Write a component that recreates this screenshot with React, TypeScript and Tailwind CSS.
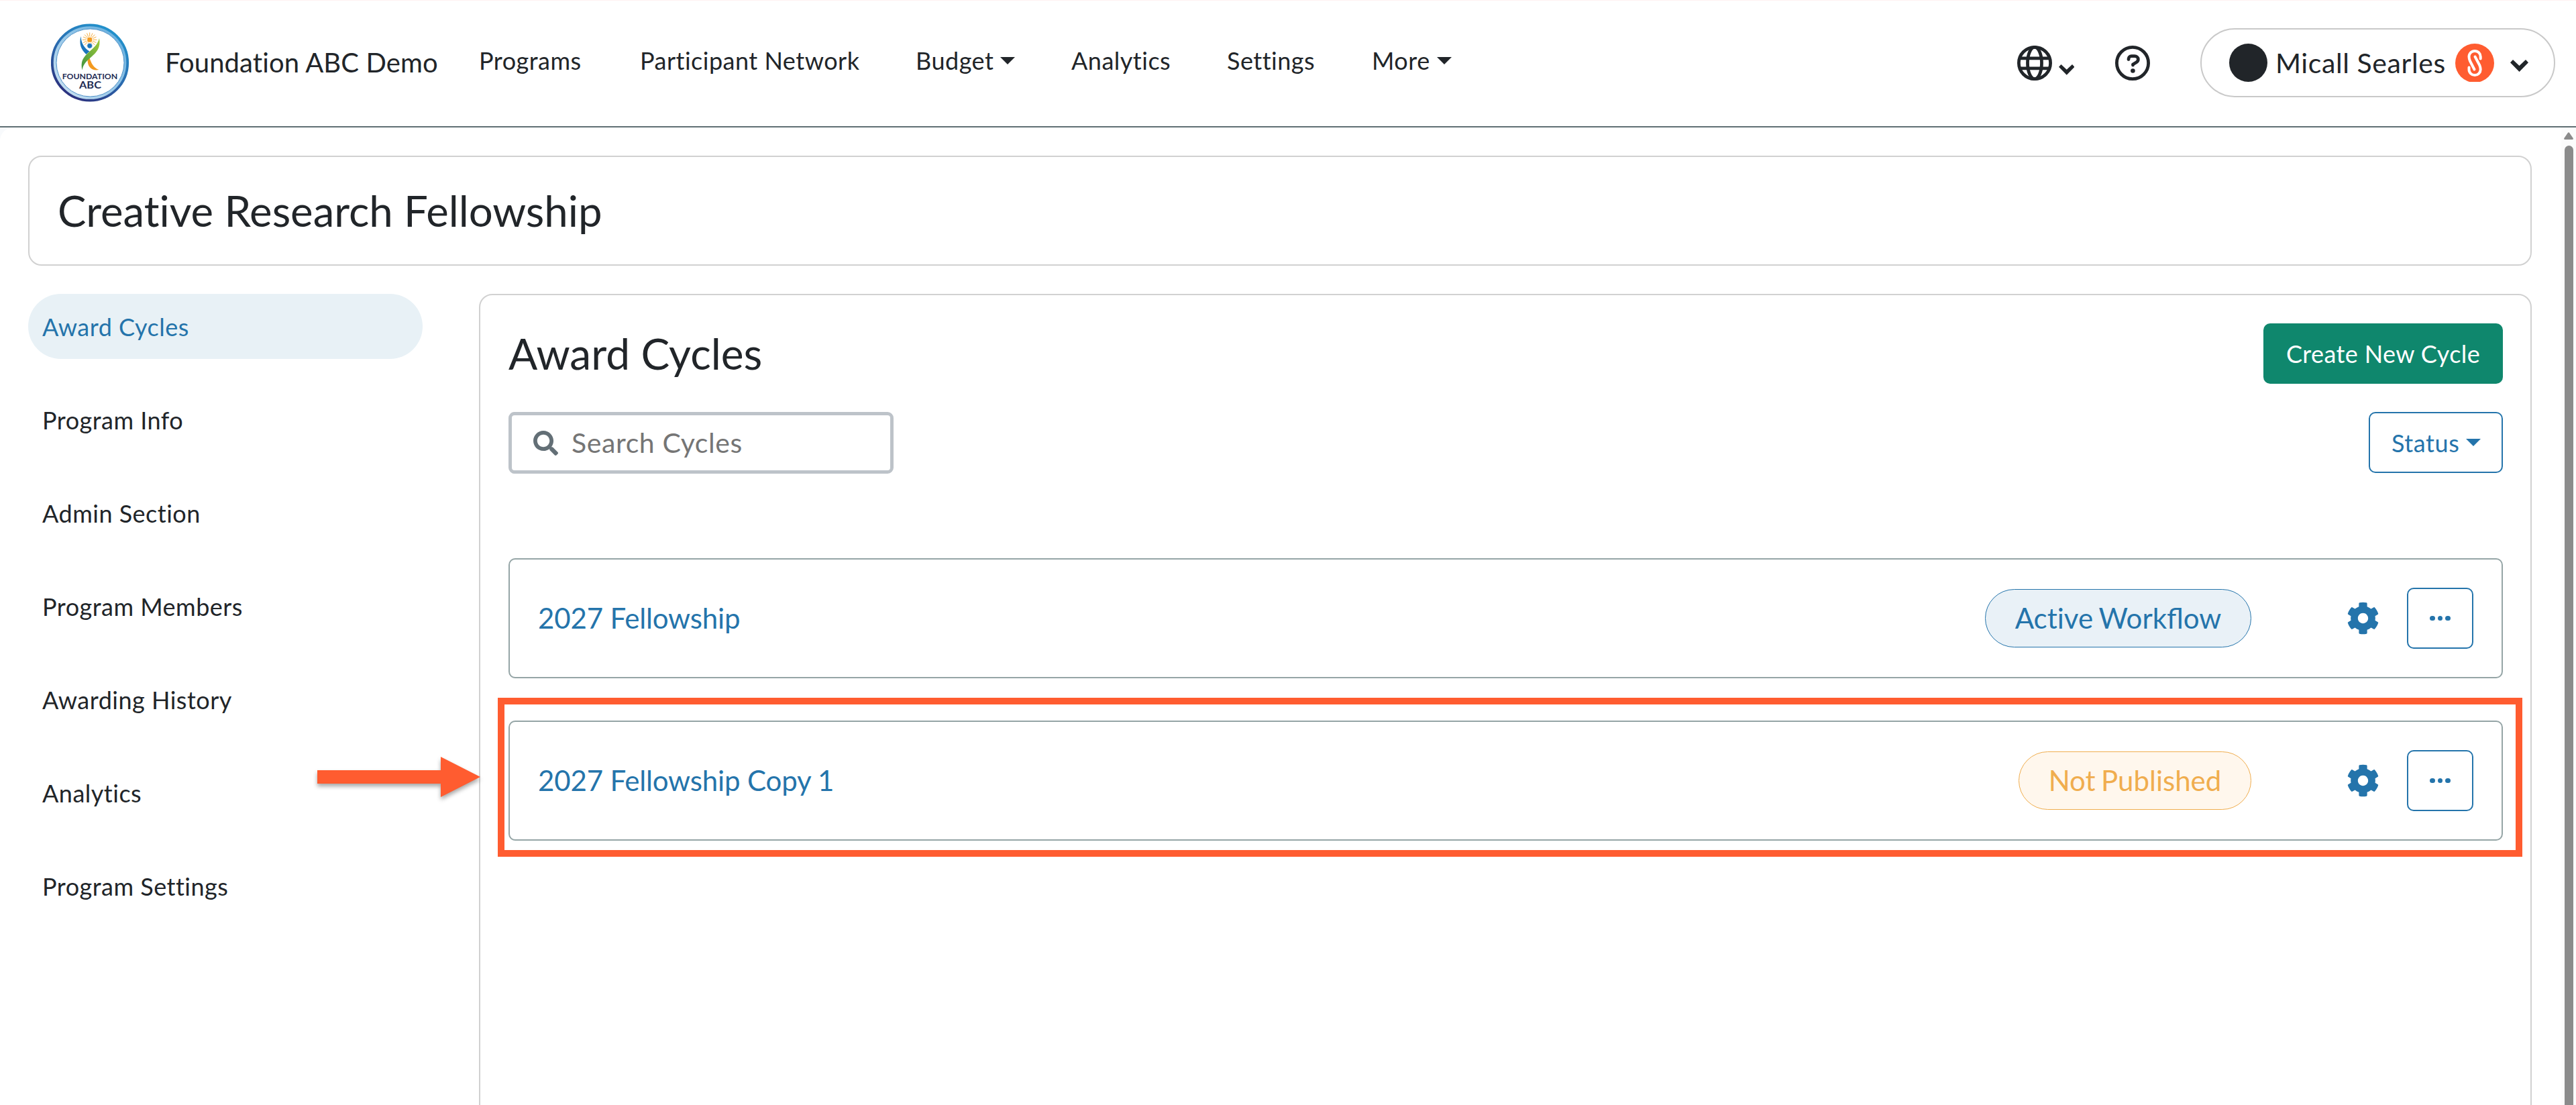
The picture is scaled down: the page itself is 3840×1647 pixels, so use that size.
import { FaCog, FaSearch } from 'react-icons/fa'

const navItems = [
  { label: 'Programs', width: 'w-[240px]' },
  { label: 'Participant Network', width: 'w-[411px]' },
  { label: 'Budget', width: 'w-[232px]', caret: true },
  { label: 'Analytics', width: 'w-[232px]' },
  { label: 'Settings', width: 'w-[216px]' },
  { label: 'More', width: 'w-[140px]', caret: true },
]

const sideItems = [
  'Award Cycles',
  'Program Info',
  'Admin Section',
  'Program Members',
  'Awarding History',
  'Analytics',
  'Program Settings',
]

const cycles = [
  { name: '2027 Fellowship', status: ['Active', 'Workflow'], published: true },
  { name: '2027 Fellowship Copy 1', status: ['Not', 'Published'], published: false },
]

function Caret() {
  return (
    <svg width="22" height="11" viewBox="0 0 22 11" className="ml-2.5 shrink-0" fill="currentColor">
      <path d="M0 0H22L11 11Z" />
    </svg>
  )
}

function Chevron({ className }: { className: string }) {
  return (
    <svg viewBox="0 0 27 18" className={className} fill="currentColor">
      <path d="M4 0L13.500 9L23 0L27 4.200L13.500 18L0 4.200Z" />
    </svg>
  )
}

function FoundationLogo() {
  return (
    <svg width="118" height="118" viewBox="0 0 118 118" className="shrink-0">
      <defs>
        <linearGradient id="ring" x1="0.2" y1="1" x2="0.8" y2="0">
          <stop offset="0" stopColor="#2b2a78" />
          <stop offset="0.5" stopColor="#2a6cb0" />
          <stop offset="1" stopColor="#2196cf" />
        </linearGradient>
        <linearGradient id="band" x1="1" y1="0" x2="0" y2="1">
          <stop offset="0" stopColor="#5aa9dc" />
          <stop offset="1" stopColor="#d4e6f4" />
        </linearGradient>
        <linearGradient id="leaf" x1="0" y1="1" x2="1" y2="0">
          <stop offset="0" stopColor="#3f9440" />
          <stop offset="1" stopColor="#a3cb38" />
        </linearGradient>
      </defs>
      <circle cx="58" cy="58.500" r="56.200" fill="url(#band)" stroke="url(#ring)" strokeWidth="3.800" />
      <circle cx="58.500" cy="58.500" r="50.500" fill="#fff" stroke="#4d90c8" strokeWidth="1" />
      <path
        d="M57.700 13.500V35M47 24.300H68.500M50 16.600L65.400 32M65.400 16.600L50 32M53.500 14.500L62 34M62 14.500L53.500 34M48 20L67.500 28.600M67.500 20L48 28.600"
        stroke="#f3a52c"
        strokeWidth="0.900"
      />
      <circle cx="57.700" cy="24.300" r="4.800" fill="#fff" />
      <rect x="54.200" y="20.800" width="7" height="7" rx="2" fill="#f39a1f" />
      <circle cx="57.700" cy="33.300" r="4" fill="#1b75bb" stroke="#fff" strokeWidth="0.800" />
      <path d="M44.500 19C45.500 30 49 36 57.500 41.500L52.500 46C45 39 41.500 31 44.500 19Z" fill="#1b75bb" />
      <path d="M57 50C60 59 63 66 71.500 69C62 71 54.500 66 54.500 54Z" fill="#f39a1f" />
      <path d="M72 22C74.500 36 68 43 60 50C52 57 48 61 46.500 69.500C44 58 47 52 54 45C62 37.500 69 33 72 22Z" fill="url(#leaf)" />
      <text x="16.700" y="82.700" fontSize="10.500" fontWeight="700" fill="#232c54" textLength="82.500" lengthAdjust="spacingAndGlyphs">
        FOUNDATION
      </text>
      <text x="42" y="97" fontSize="14.400" fontWeight="700" fill="#232c54" textLength="33" lengthAdjust="spacingAndGlyphs">
        ABC
      </text>
    </svg>
  )
}

function GlobeIcon() {
  return (
    <svg width="52" height="52" viewBox="0 0 52 52" fill="none" stroke="currentColor" strokeWidth="4.800" className="shrink-0">
      <circle cx="26" cy="26" r="23.600" />
      <ellipse cx="26" cy="26" rx="10.500" ry="23.600" />
      <path d="M3 18.800H49M3 33.800H49" />
    </svg>
  )
}

function HelpIcon() {
  return (
    <svg width="52" height="52" viewBox="0 0 52 52" fill="none" stroke="currentColor" strokeWidth="4.800" className="shrink-0">
      <circle cx="26" cy="26" r="23.600" />
      <path d="M20 20.500V20C20 17.500 21.800 15.700 24.300 15.700H29C32 15.700 34.300 17.800 34.300 20.500C34.300 22.400 33.400 23.800 31.800 24.800L26.500 28V29" strokeLinecap="round" strokeLinejoin="round" />
      <circle cx="26.400" cy="37.500" r="3.300" fill="currentColor" stroke="none" />
    </svg>
  )
}

function BrandBadge() {
  return (
    <svg width="58" height="57" viewBox="0 0 58 57" className="shrink-0">
      <circle cx="29" cy="29" r="29" fill="#ff5c30" />
      <g fill="none" stroke="#fff" strokeWidth="4" strokeLinecap="round">
        <path d="M37.700 22.500V19.500A8.600 8.600 0 0 0 20.500 19.500C20.500 22 21 23.500 22 26L28.500 38.500" />
        <path d="M20.500 35.500V38.500A8.600 8.600 0 0 0 37.700 38.500C37.700 36 37.200 34.500 36.200 32L29.500 19.500" />
      </g>
    </svg>
  )
}

function Header() {
  return (
    <header className="flex h-[190px] shrink-0 items-center border-t border-b-2 border-t-[#fff1f2] border-b-[#5f6f73] bg-white pb-0.5">
      <div className="ml-[76px] flex items-center">
        <FoundationLogo />
        <span className="mb-0.5 ml-[52px] w-[468px] text-[40px] leading-[48px] tracking-[0.1px]">Foundation ABC Demo</span>
      </div>
      <nav className="mb-[7px] flex text-[36px] leading-[54px] tracking-[0.5px]">
        {navItems.map((item) => (
          <a key={item.label} className={`${item.width} flex items-center`}>
            {item.label}
            {item.caret && <Caret />}
          </a>
        ))}
      </nav>
      <div className="mr-[31px] ml-auto flex items-center">
        <GlobeIcon />
        <Chevron className="mt-[21px] ml-2.5 w-[23.500px]" />
        <span className="w-[61px]" />
        <HelpIcon />
        <div className="ml-[75px] flex h-[103px] w-[529px] items-center rounded-full border-2 border-[#c9c9c9] pl-[41px]">
          <span className="size-[57px] shrink-0 rounded-full bg-[#212529]" />
          <span className="ml-3 w-[268px] text-[41px] tracking-[0.6px] whitespace-nowrap">Micall Searles</span>
          <BrandBadge />
          <Chevron className="mt-[9px] ml-6 w-[27px]" />
        </div>
      </div>
    </header>
  )
}

function Sidebar() {
  return (
    <aside className="flex w-[588px] shrink-0 flex-col gap-[42px]">
      {sideItems.map((label, i) => (
        <a
          key={label}
          className={`flex h-[97px] items-center rounded-full px-[21px] text-[36px] tracking-[0.5px] ${
            i === 0 ? 'bg-[#e8f1f6] text-[#2474ab]' : ''
          }`}
        >
          {label}
        </a>
      ))}
    </aside>
  )
}

export default function App() {
  return (
    <div className="relative flex h-[1647px] w-[3840px] flex-col overflow-hidden bg-[#f8fafc] font-[Lato,sans-serif] text-[#212529] [font-variant-ligatures:none]">
      <Header />
      <div className="flex min-h-0 flex-1">
        <main className="flex flex-1 flex-col rounded-tl-[20px] bg-white pt-[42px] pr-[44px] pl-[42px]">
          <div className="flex h-[164px] shrink-0 items-center rounded-[20px] border-2 border-[#d1d1d1] px-[42px]">
            <h1 className="text-[63.500px] leading-none">Creative Research Fellowship</h1>
          </div>

          <div className="mt-[42px] flex">
            <Sidebar />
            <section className="ml-[84px] h-[1300px] flex-1 rounded-[20px] border-2 border-[#d1d1d1] pt-[42px] pr-[41px] pl-[42px]">
              <div className="flex h-[90px] items-center justify-between">
                <h2 className="text-[64px] leading-none">Award Cycles</h2>
                <button className="h-[90px] w-[357px] rounded-[10px] bg-[#0f876d] text-[36px] tracking-[0.4px] text-white">
                  Create New Cycle
                </button>
              </div>

              <div className="mt-[42px] flex justify-between">
                <div className="flex h-[92px] w-[574px] items-center rounded-[9px] border-[5px] border-[#bdc3c9] pl-8 text-[41px] tracking-[0.6px] text-[#757575]">
                  <FaSearch className="mr-5 size-[37px] text-[#636f76]" />
                  Search Cycles
                </div>
                <button className="flex h-[91px] w-[200px] items-center rounded-[10px] border-2 border-[#2474ab] pl-8 text-[36px] tracking-[0.6px] text-[#2474ab]">
                  Status
                  <Caret />
                </button>
              </div>

              <div className="mt-[126px] flex flex-col gap-[63px]">
                {cycles.map((cycle) => (
                  <div key={cycle.name} className="flex h-[179px] items-center rounded-[10px] border-2 border-[#95a5a6] px-[42px] text-[#2474ab]">
                    <a className="text-[42px] tracking-[-0.15px]">{cycle.name}</a>
                    <span
                      className={`mr-[142px] ml-auto flex h-[87px] items-center justify-center gap-[0.2em] rounded-full border text-[42px] ${
                        cycle.published
                          ? 'w-[397px] border-[#2474ab] bg-[#e9f1f7]'
                          : 'w-[347px] border-[#f0ad4e] bg-[#fff7ed] text-[#f0ad4e]'
                      }`}
                    >
                      <span>{cycle.status[0]}</span>
                      <span className="[font-variant-ligatures:normal]">{cycle.status[1]}</span>
                    </span>
                    <FaCog className="mr-[41px] size-[49px]" />
                    <button className="flex h-[91px] w-[99px] items-center justify-center gap-1 rounded-[10px] border-2 border-[#2474ab]">
                      <span className="size-[7.500px] rounded-full bg-current" />
                      <span className="size-[7.500px] rounded-full bg-current" />
                      <span className="size-[7.500px] rounded-full bg-current" />
                    </button>
                  </div>
                ))}
              </div>
            </section>
          </div>
        </main>

        {/* Scrollbar */}
        <div className="flex w-[22px] flex-col items-center bg-[#fcfcfc] pt-[7px]">
          <svg width="14" height="11" viewBox="0 0 14 11" fill="#8b8b8b">
            <path d="M6 0.800Q7 -0.500 8 0.800L13.700 9Q14.300 11 12.500 11H1.500Q-0.300 11 0.300 9Z" />
          </svg>
          <div className="mt-[9px] w-[13px] flex-1 rounded-t-full bg-[#8b8b8b]" />
        </div>
      </div>

      {/* Callout around the copied cycle */}
      <div className="absolute top-[1040px] left-[742px] h-[237px] w-[3018px] border-[10px] border-[#ff5c30]" />
      <svg className="absolute top-[1120px] left-[465px] drop-shadow-[0_4px_3px_rgba(0,0,0,0.35)]" width="260" height="80" viewBox="0 0 260 80">
        <path d="M8 28H192V8L251 38L192 68V48H8Z" fill="#ff5c30" />
      </svg>
    </div>
  )
}
